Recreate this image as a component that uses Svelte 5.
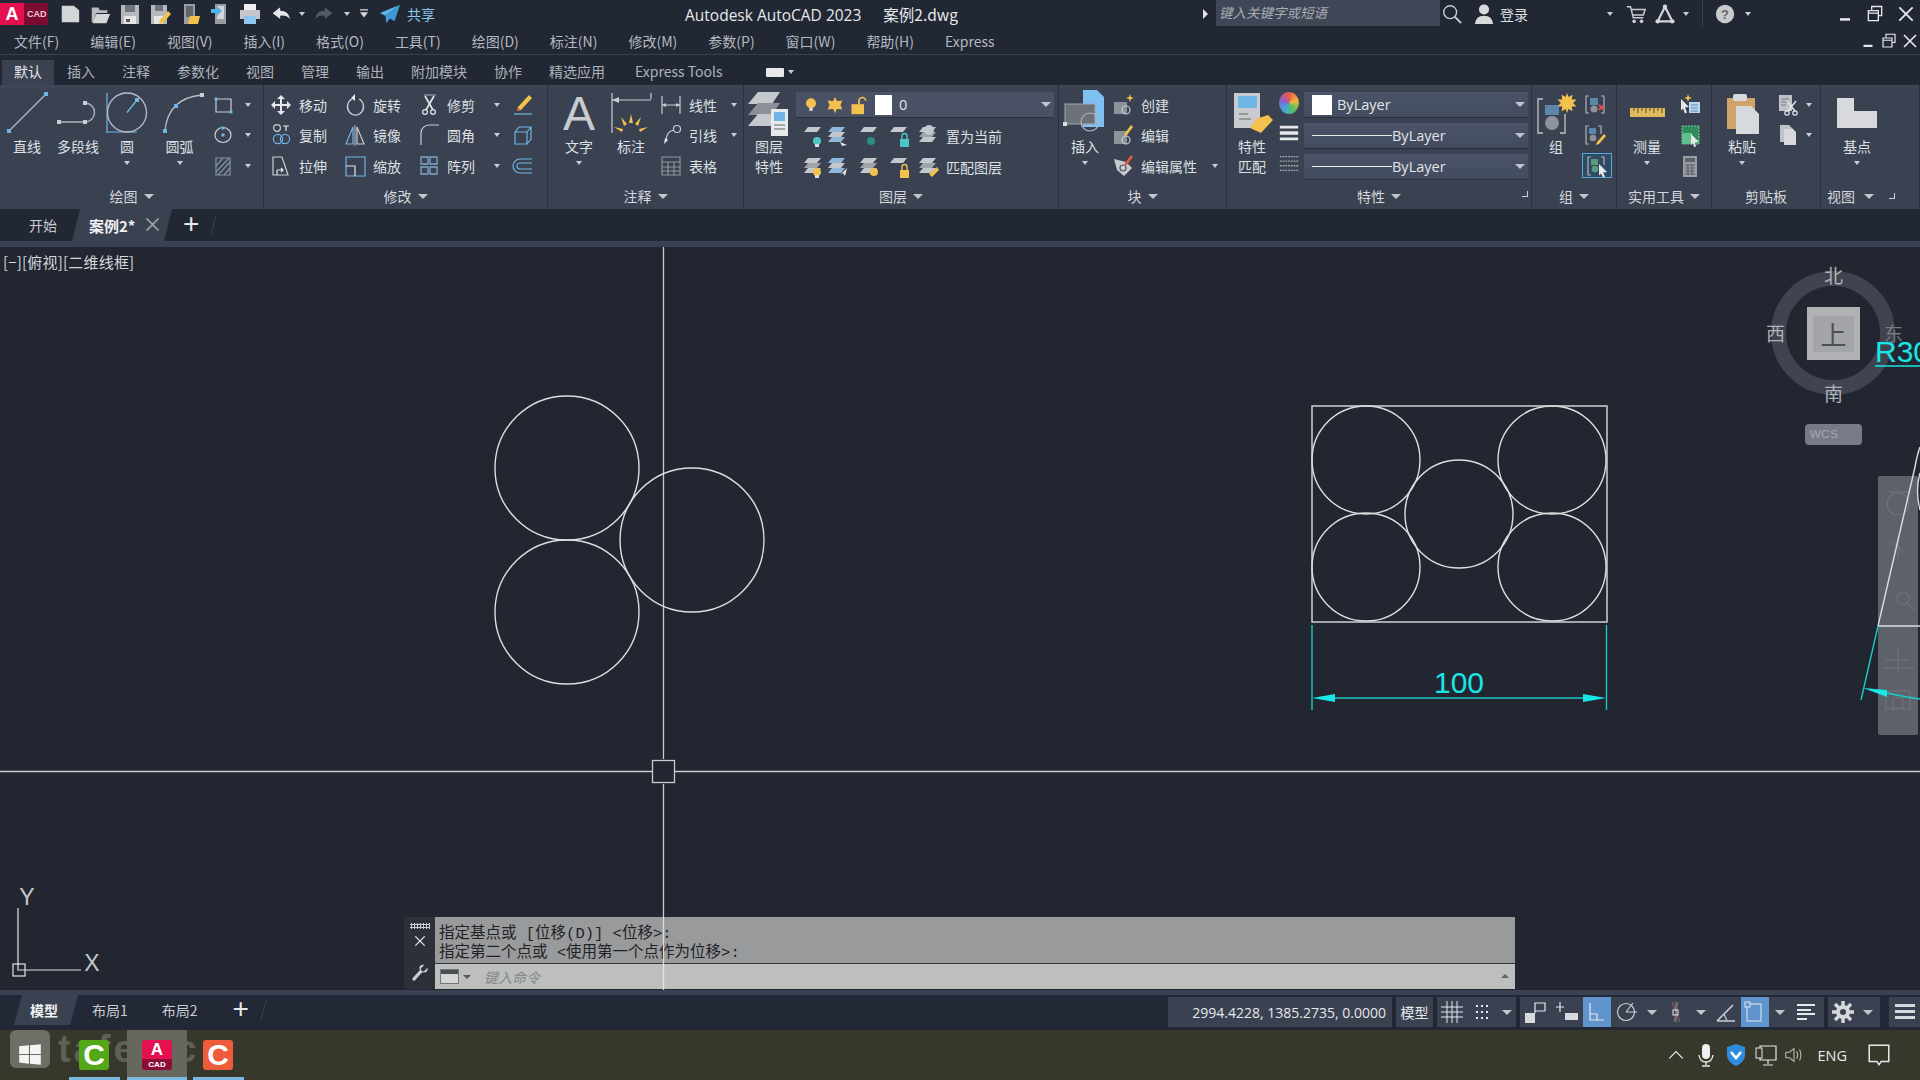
<script>
  const G = "#c9cdd3", B = "#6fb5e6", W = "#e6e8ec", Y = "#f2c14e";
  const l = (d, c = G, w = 1.2) => `<path d="${d}" fill="none" stroke="${c}" stroke-width="${w}"/>`;
  const f = (d, c = G) => `<path d="${d}" fill="${c}"/>`;
  const pt = (x, y, c = B, s = 3) => `<rect x="${x - s / 2}" y="${y - s / 2}" width="${s}" height="${s}" fill="${c}"/>`;
  const circ = (x, y, r, c = G, w = 1.2) => `<circle cx="${x}" cy="${y}" r="${r}" fill="none" stroke="${c}" stroke-width="${w}"/>`;
  const disc = (x, y, r, c) => `<circle cx="${x}" cy="${y}" r="${r}" fill="${c}"/>`;

  // flat sheet used by all the layer tools
  const sheet = (y, c = "#c4c7cc") => f(`M7 ${y}h13l-4 5H3z`, c);
  const stack = sheet(3) + sheet(8, "#9fa4ab") + sheet(13);
  const bstack = sheet(3, "#8fb8dc") + sheet(8) + sheet(13, "#8fb8dc");
  const bulb = (c) => disc(16, 17, 4, c) + `<rect x="14" y="20" width="4" height="3" fill="#ddd"/>`;
  const lock = (c) => `<rect x="13" y="15" width="9" height="8" fill="${c}"/>` + l("M15 15v-3a2.500 2.500 0 0 1 5 0v3", c, 1.4);
  const star = "M0-15l2 6 6-3-1 7 7 0-5 5 5 5-7 0 1 7-6-3-2 6-2-6-6 3 1-7-7 0 5-5-5-5 7 0-1-7 6 3z";

  const ic = {
    rect: l("M5 6h15v13H5z") + pt(5, 6) + pt(20, 19),
    ell: l("M4 12a8 7.5 0 1 0 16 0a8 7.5 0 1 0-16 0") + pt(12, 12) + pt(12, 5),
    hatch: l("M5 4h14v17H5z", "#8a909a") + l("M5 12l7-8M5 18l13-14M7 21l12-13M13 21l6-7", "#7d93ad"),
    move: f("M12 2l4 4h-3v5h5V8l4 4-4 4v-3h-5v5h3l-4 4-4-4h3v-5H6v3l-4-4 4-4v3h5V6H8z", W),
    rotate: l("M9 6a8 8.5 0 1 0 7 0", G, 1.4) + f("M12 1v7l-4-3z", W),
    trim: l("M7 2h12", "#9aa0a8") + l("M8 3l8 14M17 3L9 17", W, 1.6) + circ(8, 19, 2.4, W) + circ(16, 19, 2.4, W),
    pencil: f("M18 2l3 3-11 12-4 1 1-4z", Y) + f("M6 14l4 3-4 1z", "#e05a4a") + l("M3 21h18", B),
    copy: circ(8, 5, 3.4) + l("M14 3h6M17 3v5", W) + circ(9, 16, 4.6, B) + circ(16, 16, 4.6, B),
    mirror: l("M10 4L3 21h7z", B) + l("M14 4l7 17h-7z", G) + l("M12 2v21", W, .8),
    fillet: l("M4 22V10a8 8 0 0 1 8-8h10", G),
    box: l("M4 9h12v12H4zM4 9l4-5h12v12l-4 5M16 9l4-5", B),
    stretch: l("M4 3h9l6 18H4z", G) + l("M8 16h6M12 14l2 2-2 2M8 16v5", W),
    scale: l("M3 3h19v19H3z", B) + l("M3 12h9v10", W),
    array: l("M4 3h7v7H4zM13 3h7v7h-7zM4 13h7v7H4zM13 13h7v7h-7z", "#7ea6cc", 1.3),
    offset: l("M21 5H9a7 7 0 0 0 0 14h12M21 9H9a3 3 0 0 0 0 6h12", B),
    linear: l("M3 3v18M21 3v18M3 12h18", G) + f("M3 12l4-2v4zM21 12l-4-2v4z", G),
    leader: circ(18, 6, 3.5) + l("M15 7q-7 1-8 10", G) + f("M5 21l1-6 3 2z", W),
    table: l("M3 3h18v18H3zM3 8h18M3 13h18M3 17h18M9 8v13M15 8v13", "#8f959e"),
    create: `<rect x="3" y="9" width="13" height="12" fill="#8e939b"/>` + circ(15, 17, 4, "#c8ccd2") + f("M19 1l1 3 3 1-3 1-1 3-1-3-3-1 3-1z", Y),
    edit: `<rect x="3" y="8" width="13" height="13" fill="#8e939b"/>` + circ(15, 17, 4, "#c8ccd2") + f("M20 2l2 2-6 8-3 1 1-3z", Y),
    attr: f("M3 5l12 3 6 6-8 8-7-6z", "#c8ccd2") + circ(12, 14, 3, "#555") + f("M20 1l2 2-6 8-3 1 1-3z", "#e05a4a"),
    lw: f("M2 4h20v3H2zM2 10h20v4H2zM2 17h20v3H2z", W),
    ltype: `<path d="M2 5h20M2 10h20M2 15h20M2 20h20" fill="none" stroke="#a6aab0" stroke-width="1.4" stroke-dasharray="2 1"/>`,
    groupx: l("M6 3H3v17h3M18 3h3v17h-3", "#aeb3ba") + `<rect x="7" y="5" width="8" height="7" fill="#5c87ad"/>` + disc(11, 16, 3.5, "#8e939b") + l("M16 12l5 5M21 12l-5 5", "#e0505a", 1.8),
    groupe: l("M6 3H3v18h3M15 3h3v8", "#aeb3ba") + `<rect x="6" y="5" width="7" height="6" fill="#5c87ad"/>` + disc(10, 15, 3.3, "#8e939b") + f("M21 11l2 2-7 8-3 1 1-3z", Y),
    groups: l("M6 3H3v18h3M16 3h3v8", "#aeb3ba") + `<rect x="6" y="5" width="7" height="6" fill="#5c9a7d"/>` + disc(10, 15, 3.3, "#5c9a7d") + f("M14 10l8 8-4 .5 2 4-2 1-2-4-2 2z", W),
    qselect: f("M3 6l8 8-4 .5 2 5-2 1-2-5-2 2z", W) + `<rect x="11" y="9" width="11" height="11" fill="#b8d8f0"/>` + l("M13 12h7M13 15h7M13 18h7", "#5c87ad") + f("M10 1l1 3 3 1-3 1-1 3-1-3-3-1 3-1z", Y),
    csel: `<rect x="4" y="3" width="17" height="18" fill="#2f8a5c" stroke="#7fd0a0" stroke-dasharray="2 1"/><rect x="4" y="10" width="10" height="11" fill="#5fc08c"/>` + f("M13 11l8 8-4 .5 1 4-2 .5-1-4-2 2z", W),
    calc: `<rect x="5" y="2" width="14" height="21" fill="#9a9da2"/><rect x="7" y="4" width="10" height="4" fill="#5d6168"/>` + l("M7 11h10M7 14h10M7 17h10M7 20h10M10 10v11M14 10v11", "#5d6168"),
    cut: `<rect x="4" y="2" width="13" height="16" fill="#bfc2c6"/>` + l("M6 6h8M6 9h8M6 12h5", "#777") + l("M12 8l8 10M21 8l-8 10", W, 1.4) + circ(12, 20, 2.2, W) + circ(20, 20, 2.2, W),
    paper: f("M5 2h9l4 4v13H5z", "#bfc2c6") + f("M9 6h9l3 3v13H9z", "#d8d9dc"),
    file: f("M3 3h13l6 5v13H3z", "#d5d6d8"),
    open: f("M3 5h7l2 3h8v3H8l-3 10H3z", "#b8bbc0") + f("M8 12h15l-4 10H4z", "#d5d6d8"),
    save: f("M3 3h18v19H3z", "#b6b9be") + `<rect x="7" y="3" width="10" height="7" fill="#70757d"/><rect x="6" y="14" width="12" height="8" fill="#e4e5e7"/><rect x="8" y="17" width="4" height="3" fill="#555"/>`,
    saveas: f("M3 3h16v19H3z", "#b6b9be") + `<rect x="7" y="3" width="8" height="6" fill="#70757d"/><rect x="6" y="14" width="9" height="8" fill="#e4e5e7"/>` + f("M20 9l3 3-8 9-4 1 1-4z", Y),
    webopen: f("M6 2h11v20H6z", "#9a9da2") + `<rect x="8" y="4" width="7" height="11" fill="#60656c"/>` + f("M12 14h10l-2 8H10z", Y),
    websave: f("M7 2h11v20H7z", "#9a9da2") + `<rect x="9" y="4" width="7" height="13" fill="#d5d6d8"/>` + f("M3 7h6V4l5 5-5 5v-3H3z", "#53b4ea"),
    print: `<rect x="6" y="2" width="12" height="7" fill="#f0f0f0"/><rect x="2" y="8" width="20" height="9" fill="#c4c6ca"/><rect x="6" y="14" width="12" height="8" fill="#8fc6ee"/>`,
    undo: f("M2 11l9-7v4q10 0 12 10-5-5-12-4v4z", "#e4e6e9"),
    redo: f("M22 11l-9-7v4Q3 8 1 18q5-5 12-4v4z", "#555b65"),
    more: f("M5 4h14v2H5zM5 9h14l-7 9z", "#d6d8dc"),
    plane: f("M23 2L1 11l6 3z", "#5fb6ea") + f("M23 2L7 14l1 8 4-5 5 3z", "#3e9ad6"),
    find: circ(10, 10, 7, "#c9cdd3", 1.5) + l("M15 15l7 7", "#c9cdd3", 2),
    user: disc(12, 7, 5.5, "#d8dadd") + f("M2 23q1-9 10-9t10 9z", "#d8dadd"),
    cart: l("M2 4h4l3 12h11M7 7h15l-2 6H9", "#c9cdd3", 1.6) + disc(10, 20, 2, "#c9cdd3") + disc(18, 20, 2, "#c9cdd3"),
    a360: l("M12 4L4 20h16z", "#d6d8dc", 2.4) + disc(12, 4, 2.4, "#d6d8dc") + disc(4, 20, 2.4, "#d6d8dc") + disc(20, 20, 2.4, "#d6d8dc"),
    help: disc(12, 12, 10, "#c8cacd") + `<text x="12" y="17" text-anchor="middle" font-size="14" font-family="Liberation Sans" font-weight="700" fill="#666">?</text>`,
    min: f("M6 17h12v3H6z", W),
    restore: l("M8 7V3h12v11h-4M4 8h12v12H4zM4 11h12", W, 1.6),
    close: l("M4 4l16 16M20 4L4 20", W, 2.2),
    grid: l("M7 1v22M12 1v22M17 1v22M1 7h22M1 12h22M1 17h22", W, 1),
    snap: f("M6 5h2v2H6zM11 5h2v2h-2zM16 5h2v2h-2zM6 11h2v2H6zM11 11h2v2h-2zM16 11h2v2h-2zM6 17h2v2H6zM11 17h2v2h-2zM16 17h2v2h-2z", W),
    infer: `<rect x="2" y="13" width="10" height="10" fill="#d8dadd"/>` + l("M12 13V3h10v8H12", W),
    dyn: l("M5 2v10M1 7h8", W) + `<rect x="10" y="13" width="13" height="7" fill="#d8dadd"/>`,
    ortho: l("M5 3v17h14M5 14h7v6", W, 1.2),
    polar: circ(11, 12, 8.5) + l("M11 12l7-9M11 12h11", G),
    osnap: l("M8 2l8 20M14 2l-4 20", "#a4545a") + l("M12 2v20", "#5f9f7f") + `<rect x="9" y="10" width="5" height="5" fill="none" stroke="${W}"/>`,
    iso: l("M3 21L19 5M3 21h18", G, 1.6) + l("M10 14l3 7", G),
    osnap2: `<rect x="4" y="4" width="14" height="17" fill="none" stroke="${W}"/><rect x="2" y="2" width="5" height="5" fill="#5f95cc" stroke="${W}"/>`,
    lwd: f("M3 4h18v2H3zM3 9h14v2H3zM3 13h18v2H3zM3 18h10v2H3z", W),
    gear: disc(12, 12, 7, "#d6d8dc") + l("M12 1v22M1 12h22M4 4l16 16M20 4L4 20", "#d6d8dc", 3.4) + disc(12, 12, 3, "#3a4150"),
    menu: f("M2 4h20v3H2zM2 10h20v3H2zM2 16h20v3H2z", "#d6d8dc"),
    win: f("M2 4l9-1v8H2zM12 3l10-1v9H12zM2 12h9v8l-9-1zM12 12h10v9l-10-1z", "#f4f4f4"),
    mic: `<rect x="8" y="1" width="8" height="15" rx="4" fill="#f0f0f0"/>` + l("M5 12q1 7 7 7t7-7M12 19v3M8 23h8", W, 1.4),
    shield: f("M12 1l9 3v8q0 7-9 11-9-4-9-11V4z", "#2e8de0") + l("M7 9l5 6 5-6", "#fff", 2.6),
    net: l("M6 3h16v14H6zM14 17v4M9 22h10", W) + `<rect x="2" y="5" width="6" height="10" fill="#35382a" stroke="${W}"/>`,
    vol: l("M3 9h4l5-4v14l-5-4H3zM15 8q2 4 0 8M18 6q3 6 0 12", "#b8bab0"),
    note: l("M3 3h18v15h-7l-2 3-2-3H3z", W, 1.4),
    chev: l("M4 16l8-8 8 8", W, 1.4),
    s1: sheet(3) + bulb("#4fc6c6"),
    s2: bstack + f("M15 18l7 3-5 1z", W),
    s3: sheet(3) + disc(14, 17, 4, "#2a8f7f"),
    s4: sheet(3) + lock("#4fc6c6"),
    s5: stack + disc(13, 6, 5, "#c4c7cc"),
    s6: stack + bulb(Y),
    s7: bstack + f("M22 13l-2 8-2-3-3 2z", W),
    s8: stack + disc(17, 17, 4, Y),
    s9: sheet(3) + lock(Y),
    s10: stack + f("M21 12l2 3-7 7-3-3z", Y),
  };

  // big tools have their own 50x46 box
  const big = {
    line: l("M7 41L44 4", "#aeb3bb", 1.4) + pt(7, 41, B, 4) + pt(44, 4, B, 4),
    pline: l("M6 32H32A9.5 9.5 0 0 0 32 13", "#aeb3bb", 1.4) + pt(6, 32, G, 4) + pt(32, 32, G, 4) + pt(32, 13, G, 4),
    circle: l("M5 3v40M5 42h30", B, 1.2) + circ(25, 22.5, 19.5, "#b8bcc3", 1.3) + l("M25 22.5L35 10", B, 1.4) + pt(35, 10, B, 4),
    arc: l("M10 41Q13 8 47 5", "#b8bcc3", 1.3) + pt(10, 41, B, 4) + pt(21, 16, B, 4) + pt(47, 5, G, 4),
    text: `<text x="25" y="40" text-anchor="middle" font-family="Liberation Sans" font-size="48" fill="#c8cbd0">A</text>`,
    dim: l("M6 3v40M45 3v6M6 10h39", "#c9cdd3", 1.2) + f("M6 10l7-3v6z", "#c9cdd3") + f("M25 24l2 9h-4zM15 27l6 7-3 2zM35 27l-6 7 3 2zM8 37l9 2-1 3zM42 37l-9 2 1 3z", Y),
    layer: f("M14 2h22l-8 12H4z", "#c5c8cc") + f("M14 13h22l-8 12H4z", "#8d9197") + f("M14 24h22l-8 12H4z", "#c5c8cc") + `<rect x="27" y="19" width="17" height="27" fill="#e8e9ea"/><rect x="30" y="22" width="11" height="9" fill="#6fb5e6"/>` + l("M30 35h11M30 39h11", "#666"),
    insert: f("M23 0h14l7 7v30H23z", "#7fc0f2") + `<rect x="5" y="14" width="30" height="20" fill="#6d7178" stroke="#a5a8ad"/>` + circ(30, 32, 9, "#b4b7bc") + pt(5, 34, "#ddd", 4),
    match: `<rect x="7" y="3" width="26" height="35" fill="#c9cbcf"/><rect x="11" y="6" width="19" height="12" fill="#6fb5e6"/>` + l("M12 24h9M12 29h12", "#666") + f("M41 25l5 5-12 13-11-5 6-9z", Y),
    group: l("M12 9H7v34h5M34 24v19h-5", "#c2c5ca", 1.3) + `<rect x="14" y="15" width="14" height="10" fill="#5c87ad"/>` + disc(21, 33, 7, "#8e939b") + `<g transform="translate(36 13) scale(.68)">${f(star, Y)}</g>`,
    ruler: `<rect x="8" y="18" width="35" height="9" fill="#e0b860"/>` + l("M12 18v3M16 18v5M20 18v3M24 18v5M28 18v3M32 18v5M36 18v3M40 18v5", "#7a5f20"),
    paste: `<rect x="10" y="8" width="28" height="31" fill="#d0a468"/><rect x="16" y="4" width="14" height="7" fill="#d8dadd" rx="2"/>` + f("M19 16h15l8 8v20H19z", "#d8d9dc"),
    base: f("M5 8h17v13h23v17H5z", "#d8d9dc"),
  };

  const P = (title, w, cols, corner = false, nodrop = false) => ({ title, w, cols, corner, nodrop });
  const bigT = (label, icon, w, drop = false) => ({ t: "big", label, icon, w, drop });
  const col = (w, rows, pad = 0) => ({ t: "col", w, rows, pad });
  const r = (icon, label = "", drop = false, sel = false) => ({ icon, label, drop, sel });

  const panels = [
    P("绘图", 264, [
      bigT("直线", "line", 54), bigT("多段线", "pline", 48), bigT("圆", "circle", 50, true), bigT("圆弧", "arc", 55, true),
      col(40, [r("rect", "", true), r("ell", "", true), r("hatch", "", true)], 4),
    ]),
    P("修改", 284, [
      col(74, [r("move", "移动"), r("copy", "复制"), r("stretch", "拉伸")], 5),
      col(74, [r("rotate", "旋转"), r("mirror", "镜像"), r("scale", "缩放")], 0),
      col(83, [r("trim", "修剪", true), r("fillet", "圆角", true), r("array", "阵列", true)], 0),
      col(35, [r("pencil"), r("box"), r("offset")], 11),
    ]),
    P("注释", 196, [
      bigT("文字", "text", 62, true), bigT("标注", "dim", 42),
      col(78, [r("linear", "线性", true), r("leader", "引线", true), r("table", "表格")], 7),
    ]),
    { title: "图层", w: 315, layer: true },
    P("块", 168, [
      bigT("插入", "insert", 52, true),
      col(107, [r("create", "创建"), r("edit", "编辑"), r("attr", "编辑属性", true)], 0),
    ]),
    { title: "特性", w: 305, props: true, corner: true },
    P("组", 85, [bigT("组", "group", 48), col(30, [r("groupx"), r("groupe"), r("groups", "", false, true)], 3)]),
    P("实用工具", 95, [bigT("测量", "ruler", 60, true), col(30, [r("qselect"), r("csel"), r("calc")], 1)]),
    P("剪贴板", 109, [bigT("粘贴", "paste", 60, true), col(37, [r("cut", "", true), r("paper", "", true)], 3)], false, true),
    P("视图", 99, [bigT("基点", "base", 72, true)], true),
  ];

  const layerCells = [24, 24, 40, 20, 38];
  const layerRows = [
    { icons: ["s1", "s2", "s3", "s4", "s5"], label: "置为当前" },
    { icons: ["s6", "s7", "s8", "s9", "s10"], label: "匹配图层" },
  ];
  const fileMenu = ["文件(F)", "编辑(E)", "视图(V)", "插入(I)", "格式(O)", "工具(T)", "绘图(D)", "标注(N)", "修改(M)", "参数(P)", "窗口(W)", "帮助(H)", "Express"];
  const ribbonTabs = ["默认", "插入", "注释", "参数化", "视图", "管理", "输出", "附加模块", "协作", "精选应用", "Express Tools"];

  const qat = [["file", 30, 22], ["open", 30, 22], ["save", 30, 24], ["saveas", 30, 24], ["webopen", 30, 24], ["websave", 30, 24], ["print", 30, 24]];
  const right = [
    { i: "find", w: 24 }, { i: "user", w: 24, ml: 8 }, { t: "登录", w: 104, ml: 4 }, { d: 1, w: 12 },
    { i: "cart", w: 24, ml: 8 }, { i: "a360", w: 34 }, { d: 1, w: 8 }, { v: 1, ml: 12 },
    { i: "help", w: 24, ml: 10 }, { d: 1, w: 8, ml: 7 },
    { i: "min", w: 24, ml: 81 }, { i: "restore", w: 24, ml: 6 }, { i: "close", w: 24, ml: 7 },
  ];

  const status = [
    { w: 224, cls: "coords", text: "2994.4228, 1385.2735, 0.0000" },
    { w: 37, cls: "txt", text: "模型" },
    { w: 79, items: [["grid", 30], ["snap", 30], ["d", 19]] },
    { w: 304, items: [["infer", 30], ["dyn", 33], ["ortho", 28, true], ["polar", 32], ["d", 18], ["osnap", 30], ["d", 20], ["iso", 30], ["osnap2", 28, true], ["d", 22], ["lwd", 30]] },
    { w: 52, items: [["gear", 30], ["d", 20]] },
    { w: 31, cls: "last", items: [["menu", 31]] },
  ];
</script>

{#snippet ico(name, size = 24, h = size)}
  <svg class="ic" width={size} height={h} viewBox="0 0 24 24">{@html ic[name]}</svg>
{/snippet}

{#snippet drop(light = false)}
  <i class="drop" class:light></i>
{/snippet}

{#snippet row(item)}
  <div class="row" class:sel={item.sel}>
    {@render ico(item.icon)}
    {#if item.label}<span class="lbl">{item.label}</span>{/if}
    {#if item.drop}<span class="push">{@render drop()}</span>{/if}
  </div>
{/snippet}

<div class="page">
  <header class="titlebar">
    <div class="qat">
      <div class="logo"><b>A</b><span>CAD</span></div>
      <div class="cells">
        {#each qat as [n, w, s]}
          <span class="cell" style="width:{w}px">{@render ico(n, s)}</span>
        {/each}
        <span class="cell" style="width:32px">{@render ico("undo", 20)}</span>
        <span class="cell" style="width:10px">{@render drop()}</span>
        <span class="cell" style="width:34px">{@render ico("redo", 20)}</span>
        <span class="cell" style="width:12px">{@render drop()}</span>
        <span class="cell" style="width:22px">{@render ico("more", 14)}</span>
        <span class="cell" style="width:30px">{@render ico("plane", 22)}</span>
        <span class="share">共享</span>
      </div>
    </div>
    <div class="appname">Autodesk AutoCAD 2023<span class="fname">案例2.dwg</span></div>
    <div class="caret"></div>
    <div class="search">键入关键字或短语</div>
    <div class="tright">
      {#each right as c}
        <span class="cell" style="width:{c.w ?? 1}px;margin-left:{c.ml ?? 0}px">
          {#if c.i}{@render ico(c.i, c.i === "min" || c.i === "restore" || c.i === "close" ? 20 : 22)}
          {:else if c.t}<span class="login">{c.t}</span>
          {:else if c.d}{@render drop()}
          {:else}<span class="vline"></span>{/if}
        </span>
      {/each}
    </div>
  </header>

  <nav class="menubar">
    {#each fileMenu as m}<span>{m}</span>{/each}
    <div class="mdi">
      {@render ico("min", 18)}
      {@render ico("restore", 18)}
      {@render ico("close", 18)}
    </div>
  </nav>

  <nav class="tabs">
    {#each ribbonTabs as t, i}<span class="tab" class:on={i === 0}>{t}</span>{/each}
    <span class="pill"></span>{@render drop()}
  </nav>

  <section class="ribbon">
    {#each panels as p}
      <div class="panel" style="width:{p.w}px">
        <div class="body">
          {#if p.layer}
            <div class="big" style="width:50px">
              <svg class="bigic" viewBox="0 0 50 46" width="50" height="46">{@html big.layer}</svg>
              <span class="lbl two">图层<br />特性</span>
            </div>
            <div class="layers">
              <div class="combo lay">
                <svg width="20" height="22" viewBox="0 0 24 24">{@html disc(12, 10, 6, Y) + `<rect x="10" y="15" width="4" height="4" fill="#ddd"/>`}</svg>
                <svg width="22" height="22" viewBox="0 0 24 24">{@html f("M12 3l2 5 6-1-2 5 2 5-6-1-2 5-2-5-6 1 2-5-2-5 6 1z", Y) + disc(12, 12, 5, Y)}</svg>
                <svg width="20" height="22" viewBox="0 0 24 24">{@html `<rect x="3" y="11" width="15" height="12" fill="${Y}"/>` + l("M12 11V7a4 4 0 0 1 8 0", Y, 2)}</svg>
                <i class="swatch"></i>
                <span class="val">0</span>
                <span class="push">{@render drop(true)}</span>
              </div>
              {#each layerRows as lr}
                <div class="lrow">
                  {#each lr.icons as s, i}
                    <span class="lcell" style="width:{layerCells[i]}px">{@render ico(s, 24)}</span>
                  {/each}
                  <span class="lbl llabel">{lr.label}</span>
                </div>
              {/each}
            </div>
          {:else if p.props}
            <div class="big" style="width:50px">
              <svg class="bigic" viewBox="0 0 50 46" width="50" height="46">{@html big.match}</svg>
              <span class="lbl two">特性<br />匹配</span>
            </div>
            <div class="propic">
              <span class="wheel"></span>
              {@render ico("lw", 22)}
              {@render ico("ltype", 22)}
            </div>
            <div class="combos">
              <div class="combo"><i class="swatch"></i><span class="val">ByLayer</span><span class="push">{@render drop(true)}</span></div>
              <div class="combo"><i class="rule"></i><span class="val">ByLayer</span><span class="push">{@render drop(true)}</span></div>
              <div class="combo"><i class="rule"></i><span class="val">ByLayer</span><span class="push">{@render drop(true)}</span></div>
            </div>
          {:else}
            {#each p.cols as c}
              {#if c.t === "big"}
                <div class="big" style="width:{c.w}px">
                  <svg class="bigic" viewBox="0 0 50 46" width="50" height="46">{@html big[c.icon]}</svg>
                  <span class="lbl">{c.label}</span>
                  {#if c.drop}{@render drop()}{/if}
                </div>
              {:else}
                <div class="col" style="width:{c.w}px;margin-left:{c.pad}px">
                  {#each c.rows as item}{@render row(item)}{/each}
                </div>
              {/if}
            {/each}
          {/if}
        </div>
        <div class="ptitle" class:left={p.title === "视图"}>
          <span>{p.title}</span>
          {#if !p.nodrop}{@render drop(true)}{/if}
          {#if p.corner}<i class="corner"></i>{/if}
        </div>
      </div>
    {/each}
  </section>

  <nav class="doctabs">
    <span class="dt">开始</span>
    <span class="dt on">案例2*<em>×</em></span>
    <span class="plus">+</span>
    <span class="slash"></span>
  </nav>
  <div class="strip"></div>

  <main class="canvas">
    <div class="compass">
      <div class="ring"></div>
      <div class="cube"><span>上</span></div>
      <span class="dir n">北</span><span class="dir s">南</span><span class="dir w">西</span><span class="dir e">东</span>
    </div>
    <div class="wcs">WCS</div>
    <div class="navbar">
      <svg width="40" height="259" viewBox="0 0 40 259" fill="none" stroke="#6c7079" stroke-width="1.4">
        <circle cx="20" cy="28" r="11" /><path d="M10 16h20M20 60v22M14 66l12 10" />
        <circle cx="25" cy="122" r="6" /><path d="M29 127l8 8" /><path d="M20 170v28M8 184h24M4 192h32" />
        <rect x="8" y="215" width="24" height="18" /><rect x="15" y="222" width="10" height="10" />
      </svg>
    </div>

    <svg class="draw" viewBox="0 247 1920 743" width="1920" height="743">
      <g fill="none" stroke="#dcdee0" stroke-width="1.4">
        <circle cx="567" cy="468" r="72" />
        <circle cx="567" cy="612" r="72" />
        <circle cx="692" cy="540" r="72" />
        <rect x="1312" y="406" width="295" height="216" />
        <circle cx="1366" cy="460" r="54" />
        <circle cx="1366" cy="567" r="54" />
        <circle cx="1552" cy="460" r="54" />
        <circle cx="1552" cy="567" r="54" />
        <circle cx="1459" cy="514" r="54" />
        <path d="M1878 626L1915 467Q1917 455 1920 447M1878 626H1920M1920 473Q1915 490 1920 510" />
      </g>
      <g stroke="#1cc8c8" stroke-width="1.4" fill="none">
        <path d="M1312 625V710M1606.500 625V710M1335 698H1583" />
        <path d="M1878 626L1861 700M1887 693Q1905 697 1920 699" />
      </g>
      <g fill="#19e6e6">
        <path d="M1312 698L1335 694V702zM1606 698L1583 694V702zM1863 688L1887 690V697z" />
        <text x="1459" y="693" text-anchor="middle" font-family="Liberation Sans" font-size="30">100</text>
        <text x="1875" y="362" font-family="Liberation Sans" font-size="30">R30</text>
      </g>
      <path d="M1875 366H1920" stroke="#19e6e6" stroke-width="1.4" />
      <g fill="none" stroke="#e2e4e6" stroke-width="1.2">
        <path d="M18 908V970H81" />
        <rect x="13" y="964" width="12" height="12" />
      </g>
      <g fill="#c4c6c9" font-family="Liberation Sans" font-size="23" text-anchor="middle">
        <text x="27" y="905">Y</text>
        <text x="92" y="971">X</text>
      </g>
    </svg>

    <span class="viewlabel">[−][俯视][二维线框]</span>

    <div class="cmd">
      <div class="grip">
        <i class="dots"></i>
        {@render ico("close", 14)}
        <svg class="wrench" width="18" height="18" viewBox="0 0 24 24">{@html f("M22 5l-5 5-3-1-1-3 5-5q-6-1-7 4 0 2 1 3L2 19q-1 2 1 3 2 1 3-1l9-10q4 1 6-1 2-2 1-5z", "#c9cdd3")}</svg>
      </div>
      <div class="cmdbody">
        <div class="hist">
          <p>指定基点或 [位移(D)] &lt;位移&gt;:</p>
          <p>指定第二个点或 &lt;使用第一个点作为位移&gt;:</p>
        </div>
        <div class="input">
          <i class="term"></i><i class="drop dk"></i>
          <span>键入命令</span>
          <i class="uptri"></i>
        </div>
      </div>
    </div>

    <svg class="cross" viewBox="0 247 1920 743" width="1920" height="743">
      <g stroke="#e8e9ea" stroke-width="1.3" fill="none">
        <path d="M663.500 247V759M663.500 784V990" />
        <path d="M0 771.500H652M675 771.500H1920" />
        <rect x="652.500" y="760.500" width="22" height="22" />
      </g>
    </svg>
  </main>

  <div class="strip thin"></div>

  <footer class="layoutbar">
    <span class="lt on">模型</span>
    <span class="lt">布局1</span>
    <span class="lt">布局2</span>
    <span class="plus">+</span>
    <span class="slash"></span>
    <div class="status">
      {#each status as g}
        <div class="sgroup {g.cls ?? ''}" style="width:{g.w}px">
          {#if g.text}{g.text}{:else}
            {#each g.items as [n, w, on]}
              <span class="scell" class:on style="width:{w}px">
                {#if n === "d"}{@render drop(true)}{:else}{@render ico(n, 24)}{/if}
              </span>
            {/each}
          {/if}
        </div>
      {/each}
    </div>
  </footer>

  <footer class="taskbar">
    <div class="watermark"><span class="wmbox"></span><span class="wmtext">tafe.cc</span></div>
    <div class="tbstart">{@render ico("win", 26)}</div>
    <div class="app"><span class="appic green"><b>C</b></span></div>
    <div class="app act"><span class="appic cad"><b>A</b><small>CAD</small></span></div>
    <div class="app"><span class="appic orange"><b>C</b></span></div>
    <div class="tray">
      <span class="t">{@render ico("chev", 20)}</span>
      <span class="t">{@render ico("mic", 24)}</span>
      <span class="t">{@render ico("shield", 24)}</span>
      <span class="t">{@render ico("net", 24)}</span>
      <span class="t vol">{@render ico("vol", 22)}</span>
      <span class="eng">ENG</span>
      <span class="t">{@render ico("note", 26)}</span>
    </div>
  </footer>
</div>

<style>
  :global(body) {
    margin: 0;
    background: #212630;
    font-family: "Noto Sans CJK SC", "Noto Sans", sans-serif;
  }

  .page {
    width: 1920px;
    height: 1080px;
    display: flex;
    flex-direction: column;
    overflow: hidden;
    color: #c9cdd3;
    font-size: 14px;
    background: #222835;
  }

  .ic {
    display: block;
    flex: none;
  }

  .cell {
    display: flex;
    align-items: center;
    justify-content: center;
    flex: none;
    height: 100%;
  }

  .drop {
    display: inline-block;
    width: 0;
    height: 0;
    border-left: 3.5px solid transparent;
    border-right: 3.5px solid transparent;
    border-top: 4px solid #c9cdd3;
  }

  .drop.light {
    border-left-width: 5px;
    border-right-width: 5px;
    border-top-width: 5px;
    border-top-color: #c2c6cc;
  }

  .push {
    margin-left: auto;
    display: flex;
    align-items: center;
  }

  /* title bar */
  .titlebar {
    height: 28px;
    display: flex;
    align-items: stretch;
    background: #212733;
  }

  .qat {
    width: 685px;
    display: flex;
    flex: none;
  }

  .logo {
    width: 48px;
    height: 22px;
    margin-top: 3px;
    display: flex;
    background: #7a0c32;
  }

  .logo b {
    width: 24px;
    background: #e5104f;
    color: #fff;
    font: 700 18px/22px "Liberation Sans", sans-serif;
    text-align: center;
  }

  .logo span {
    font: 700 9px/22px "Liberation Sans", sans-serif;
    color: #f0c8d4;
    padding-left: 3px;
  }

  .cells {
    display: flex;
    margin-left: 7px;
    align-items: center;
  }

  .share {
    margin-left: 2px;
    color: #8cc8ee;
  }

  .appname {
    width: 515px;
    flex: none;
    font: 15.5px/28px "Open Sans", "Noto Sans CJK SC", sans-serif;
    color: #e6e8ec;
  }

  .fname {
    margin-left: 22px;
    font-family: "Noto Sans CJK SC", sans-serif;
  }

  .caret {
    width: 16px;
    flex: none;
    position: relative;
  }

  .caret::after {
    content: "";
    position: absolute;
    left: 3px;
    top: 9px;
    border-left: 5px solid #dfe1e4;
    border-top: 5px solid transparent;
    border-bottom: 5px solid transparent;
  }

  .search {
    width: 224px;
    height: 26px;
    flex: none;
    padding-left: 3px;
    box-sizing: border-box;
    background: #3f4655;
    color: #a8acb3;
    font-style: italic;
    line-height: 24px;
    font-size: 13.5px;
  }

  .tright {
    display: flex;
    flex: 1;
  }

  .login {
    width: 100%;
    color: #dfe1e4;
  }

  .vline {
    width: 1px;
    height: 26px;
    background: #3a404d;
  }

  /* menus */
  .menubar {
    height: 26px;
    display: flex;
    align-items: center;
    padding-left: 14px;
    gap: 31px;
    background: #212733;
    border-bottom: 1px solid #3a404c;
    color: #b4b9c1;
    font-size: 14px;
  }

  .mdi {
    margin-left: auto;
    display: flex;
    gap: 3px;
    padding-right: 1px;
  }

  .tabs {
    height: 30px;
    display: flex;
    align-items: flex-end;
    background: #212733;
    padding-left: 2px;
    color: #aeb3bb;
  }

  .tab {
    height: 25px;
    line-height: 23px;
    padding: 0 12px;
    margin-right: 3px;
  }

  .tab.on {
    background: #3a4150;
    color: #e6e8ec;
    margin-right: 1px;
  }

  .tab:nth-child(11) {
    margin-left: 3px;
  }

  .pill {
    width: 18px;
    height: 9px;
    margin: 0 4px 8px 28px;
    background: #e8e9ea;
    border-radius: 1px;
  }

  .tabs .drop {
    margin-bottom: 11px;
  }

  /* ribbon */
  .ribbon {
    height: 124px;
    display: flex;
    background: linear-gradient(#3f4657 0, #3a4150 6px, #3a4150 100%);
  }

  .panel {
    flex: none;
    box-sizing: border-box;
    border-right: 1px solid #2a303c;
    display: flex;
    flex-direction: column;
  }

  .body {
    flex: 1;
    display: flex;
    min-height: 0;
    padding-top: 5px;
  }

  .big {
    flex: none;
    display: flex;
    flex-direction: column;
    align-items: center;
  }

  .bigic {
    display: block;
    flex: none;
  }

  .lbl {
    color: #dde0e5;
    line-height: 20px;
    white-space: nowrap;
  }

  .big .two {
    text-align: center;
  }

  .big .drop {
    margin-top: 5px;
  }

  .col {
    flex: none;
    display: flex;
    flex-direction: column;
    gap: 5.5px;
    padding-top: 2px;
    box-sizing: border-box;
  }

  .row {
    height: 25px;
    display: flex;
    align-items: center;
    gap: 6px;
    box-sizing: border-box;
  }

  .row.sel {
    width: 30px;
    margin-left: -1px;
    justify-content: center;
    border: 1px solid #5aa6e0;
    background: #2f4a63;
  }

  .ptitle {
    height: 24px;
    display: flex;
    align-items: center;
    justify-content: center;
    gap: 6px;
    position: relative;
    color: #d4d7dc;
    padding-bottom: 1px;
  }

  .ptitle.left {
    justify-content: flex-start;
    padding-left: 6px;
    gap: 9px;
  }

  .corner {
    position: absolute;
    right: 3px;
    top: 7px;
    width: 5px;
    height: 5px;
    border-right: 1.5px solid #c9cdd3;
    border-bottom: 1.5px solid #c9cdd3;
  }

  .left .corner {
    position: static;
    margin-left: 6px;
  }

  .layers {
    margin-left: 2px;
    width: 258px;
    display: flex;
    flex-direction: column;
    gap: 4px;
    padding-top: 2px;
  }

  .combo {
    height: 26px;
    box-sizing: border-box;
    display: flex;
    align-items: center;
    padding: 0 3px 0 8px;
    background: linear-gradient(#4b5368, #434b5f);
    border-bottom: 1px solid #2a303c;
    color: #e2e4e8;
  }

  .combo.lay {
    padding-left: 5px;
    gap: 3px;
    background: #4a5164;
  }

  .swatch {
    width: 20px;
    height: 20px;
    flex: none;
    background: #fff;
    margin-right: 5px;
  }

  .lay .swatch {
    width: 17px;
    height: 20px;
    margin: 0 4px 0 3px;
  }

  .rule {
    width: 80px;
    height: 1px;
    background: #e8e9ea;
    flex: none;
  }

  .val {
    font: 14.5px "Open Sans", sans-serif;
  }

  .lrow {
    height: 27px;
    display: flex;
    align-items: center;
    padding-left: 5px;
  }

  .lcell {
    display: flex;
    justify-content: center;
    flex: none;
  }

  .llabel {
    margin-left: -1px;
  }

  .propic {
    width: 24px;
    padding-top: 2px;
    display: flex;
    flex-direction: column;
    align-items: center;
    gap: 8px;
  }

  .wheel {
    width: 20px;
    height: 22px;
    border-radius: 50%;
    background: conic-gradient(#e8574a, #f0b840, #58c060, #40a8d8, #8860d0, #e8574a);
  }

  .combos {
    margin-left: 3px;
    width: 224px;
    display: flex;
    flex-direction: column;
    gap: 5px;
    padding-top: 2px;
  }

  /* doc tabs */
  .doctabs {
    height: 32px;
    display: flex;
    align-items: stretch;
    background: #212733;
    padding-left: 16px;
  }

  .dt {
    padding: 0 13px;
    line-height: 33px;
    color: #c9cdd3;
    white-space: nowrap;
  }

  .dt.on {
    width: 100px;
    box-sizing: border-box;
    margin-left: 2px;
    padding: 0 0 0 17px;
    background: #3a4150;
    color: #f0f1f3;
    font-size: 15px;
    font-weight: 700;
    clip-path: polygon(8px 0, 100% 0, calc(100% - 8px) 100%, 0 100%);
  }

  .dt em {
    font-style: normal;
    font-weight: 400;
    font-size: 20px;
    color: #a8acb3;
    margin-left: 7px;
    line-height: 30px;
  }

  .plus {
    font: 400 28px/30px "Liberation Sans", sans-serif;
    color: #e6e8ec;
    margin-left: 11px;
  }

  .slash {
    width: 1px;
    height: 20px;
    margin: 6px 0 0 14px;
    background: #3a404c;
    transform: rotate(15deg);
  }

  .strip {
    height: 6px;
    background: #3a4150;
  }

  .strip.thin {
    height: 5px;
  }

  /* drawing area */
  .canvas {
    position: relative;
    height: 743px;
    background: #212630;
    overflow: hidden;
  }

  .draw,
  .cross {
    position: absolute;
    left: 0;
    top: 0;
    display: block;
  }

  .cross {
    pointer-events: none;
    opacity: 0.85;
  }

  .viewlabel {
    position: absolute;
    left: 3px;
    top: 4px;
    color: #d4d7dc;
    font-size: 15px;
    letter-spacing: 0.2px;
  }

  .compass {
    position: absolute;
    left: 1771px;
    top: 24px;
    width: 124px;
    height: 124px;
  }

  .ring {
    position: absolute;
    inset: 0;
    box-sizing: border-box;
    border: 15px solid #3f4450;
    border-radius: 50%;
  }

  .cube {
    position: absolute;
    left: 36px;
    top: 36px;
    width: 53px;
    height: 53px;
    background: #b0b2b5;
    display: flex;
    align-items: center;
    justify-content: center;
    color: #4e5156;
    font-size: 26px;
  }

  .cube span {
    padding: 3px 7px;
    line-height: 30px;
    background: #a3a5a8;
  }

  .dir {
    position: absolute;
    color: #aeb1b6;
    font-size: 19px;
    line-height: 20px;
  }

  .dir.n { left: 53px; top: -6px; }
  .dir.s { left: 53px; top: 112px; }
  .dir.w { left: -5px; top: 52px; }
  .dir.e { left: 113px; top: 52px; color: #777b82; }

  .wcs {
    position: absolute;
    left: 1805px;
    top: 177px;
    width: 57px;
    height: 21px;
    box-sizing: border-box;
    padding-left: 5px;
    border-radius: 4px;
    background: #787b87;
    color: #a6a8b2;
    font: 11.5px/21px "Liberation Sans", sans-serif;
    letter-spacing: 0.5px;
  }

  .navbar {
    position: absolute;
    left: 1878px;
    top: 229px;
    width: 40px;
    height: 259px;
    border-radius: 2px;
    background: #5d616a;
  }

  .cmd {
    position: absolute;
    left: 404px;
    top: 670px;
    width: 1111px;
    height: 72px;
    display: flex;
  }

  .grip {
    width: 31px;
    flex: none;
    background: #2b3039;
    display: flex;
    flex-direction: column;
    align-items: center;
    gap: 5px;
    padding-top: 6px;
    box-sizing: border-box;
  }

  .wrench {
    margin-top: 11px;
  }

  .dots {
    width: 20px;
    height: 6px;
    background: radial-gradient(circle, #c9cdd3 1px, transparent 1.2px) 0 0 / 3px 3px;
  }

  .cmdbody {
    flex: 1;
    display: flex;
    flex-direction: column;
  }

  .hist {
    height: 47px;
    box-sizing: border-box;
    padding: 8px 0 0 4px;
    background: #999a9b;
    border-bottom: 1px solid #33373d;
    color: #1f2226;
    font: 15.5px/19px "Liberation Mono", "Noto Sans CJK SC", monospace;
  }

  .hist p {
    margin: 0;
    white-space: pre;
  }

  .input {
    flex: 1;
    background: #bcbfbc;
    display: flex;
    align-items: center;
    padding-left: 5px;
    color: #84878a;
    font-style: italic;
    position: relative;
  }

  .term {
    width: 19px;
    height: 15px;
    background: linear-gradient(#4a4e55 4px, #d4d6d6 4px);
    border: 1px solid #777;
    box-sizing: border-box;
  }

  .drop.dk {
    border-top-color: #555;
    border-left-width: 4px;
    border-right-width: 4px;
    margin: 0 13px 0 4px;
  }

  .uptri {
    position: absolute;
    right: 6px;
    top: 10px;
    border-left: 4px solid transparent;
    border-right: 4px solid transparent;
    border-bottom: 4px solid #666;
  }

  /* layouts and status */
  .layoutbar {
    height: 35px;
    display: flex;
    background: #222835;
    align-items: stretch;
  }

  .lt {
    padding: 0 18px 0 12px;
    line-height: 30px;
    color: #c9cdd3;
    height: 30px;
    margin-right: 4px;
  }

  .lt.on {
    margin-left: 14px;
    margin-right: 2px;
    padding: 0 20px 0 16px;
    background: #3a4150;
    color: #f0f1f3;
    font-weight: 700;
    clip-path: polygon(8px 0, 100% 0, calc(100% - 8px) 100%, 0 100%);
  }

  .layoutbar .plus {
    line-height: 28px;
    height: 30px;
    margin-left: 13px;
  }

  .layoutbar .slash {
    margin-top: 5px;
  }

  .status {
    margin-left: auto;
    display: flex;
    gap: 4px;
    height: 30px;
    margin-top: 2px;
  }

  .sgroup {
    height: 30px;
    background: #3a4150;
    display: flex;
    align-items: center;
    flex: none;
    box-sizing: border-box;
    color: #e6e8ec;
  }

  .sgroup.coords {
    justify-content: flex-end;
    padding-right: 6px;
    font: 14px "Open Sans", sans-serif;
  }

  .sgroup.txt {
    justify-content: center;
  }

  .sgroup.last {
    margin-left: 5px;
  }

  .scell {
    height: 100%;
    display: flex;
    align-items: center;
    justify-content: center;
    flex: none;
  }

  .scell.on {
    background: #5f95cc;
  }

  .taskbar {
    height: 50px;
    background: #35382a;
    display: flex;
    position: relative;
  }

  .watermark {
    position: absolute;
    left: 10px;
    top: 0;
    display: flex;
    align-items: center;
    height: 38px;
    gap: 8px;
  }

  .wmbox {
    width: 40px;
    height: 38px;
    border-radius: 6px;
    background: #6d6f66;
  }

  .wmtext {
    font: 700 38px/38px "Liberation Sans", sans-serif;
    color: #5f6156;
    letter-spacing: 3px;
  }

  .tbstart {
    width: 63px;
    flex: none;
    position: relative;
    display: flex;
    align-items: center;
    padding-left: 17px;
    box-sizing: border-box;
  }

  .app {
    width: 62px;
    height: 100%;
    flex: none;
    display: flex;
    align-items: center;
    justify-content: center;
    box-sizing: border-box;
    position: relative;
  }

  .app::after {
    content: "";
    position: absolute;
    left: 6px;
    right: 5px;
    bottom: 0;
    height: 3px;
    background: #7ab8e0;
  }

  .app.act {
    width: 60px;
    margin-left: 2px;
    background: #66685e;
  }

  .app.act::after {
    left: 0;
    right: 0;
  }

  .appic {
    width: 30px;
    height: 30px;
    border-radius: 3px;
    display: flex;
    flex-direction: column;
    align-items: center;
    justify-content: center;
    color: #fff;
    font: 700 30px/30px "Liberation Sans", sans-serif;
  }

  .appic.green { background: #54a818; }
  .appic.orange { background: #ef5c3c; }

  .appic.cad {
    background: #e5104f;
    font-size: 17px;
    line-height: 19px;
    overflow: hidden;
  }

  .appic small {
    width: 100%;
    text-align: center;
    font-size: 8px;
    line-height: 11px;
    background: #8c0c38;
  }

  .tray {
    margin-left: auto;
    display: flex;
    align-items: center;
    padding-right: 26px;
    height: 100%;
  }

  .t {
    width: 30px;
    display: flex;
    justify-content: center;
    flex: none;
  }

  .t.vol {
    width: 22px;
    margin-left: 2px;
  }

  .eng {
    font: 14.5px "Open Sans", sans-serif;
    color: #e6e8ec;
    margin: 0 17px 0 12px;
  }
</style>
